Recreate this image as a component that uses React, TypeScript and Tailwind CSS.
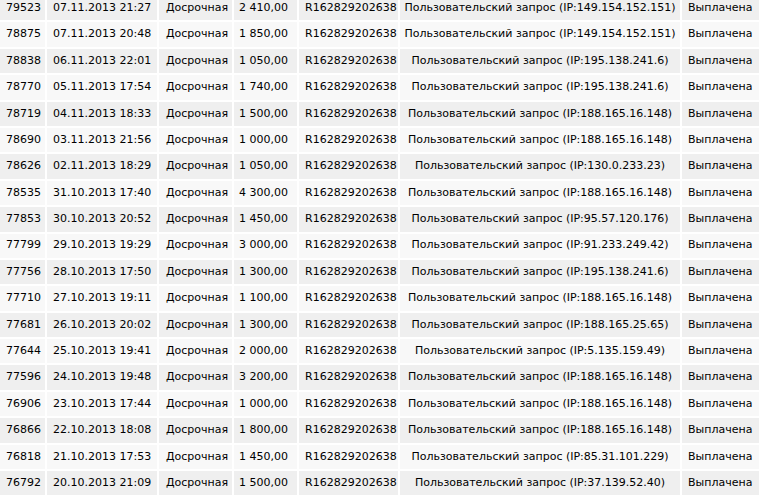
const rows: [string, string, string, string][] = [
  ["79523", "07.11.2013 21:27", "2 410,00", "149.154.152.151"],
  ["78875", "07.11.2013 20:48", "1 850,00", "149.154.152.151"],
  ["78838", "06.11.2013 22:01", "1 050,00", "195.138.241.6"],
  ["78770", "05.11.2013 17:54", "1 740,00", "195.138.241.6"],
  ["78719", "04.11.2013 18:33", "1 500,00", "188.165.16.148"],
  ["78690", "03.11.2013 21:56", "1 000,00", "188.165.16.148"],
  ["78626", "02.11.2013 18:29", "1 050,00", "130.0.233.23"],
  ["78535", "31.10.2013 17:40", "4 300,00", "188.165.16.148"],
  ["77853", "30.10.2013 20:52", "1 450,00", "95.57.120.176"],
  ["77799", "29.10.2013 19:29", "3 000,00", "91.233.249.42"],
  ["77756", "28.10.2013 17:50", "1 300,00", "195.138.241.6"],
  ["77710", "27.10.2013 19:11", "1 100,00", "188.165.16.148"],
  ["77681", "26.10.2013 20:02", "1 300,00", "188.165.25.65"],
  ["77644", "25.10.2013 19:41", "2 000,00", "5.135.159.49"],
  ["77596", "24.10.2013 19:48", "3 200,00", "188.165.16.148"],
  ["76906", "23.10.2013 17:44", "1 000,00", "188.165.16.148"],
  ["76866", "22.10.2013 18:08", "1 800,00", "188.165.16.148"],
  ["76818", "21.10.2013 17:53", "1 450,00", "85.31.101.229"],
  ["76792", "20.10.2013 21:09", "1 500,00", "37.139.52.40"],
];

export default function App() {
  return (
    <div className="w-[763px] h-[504px] overflow-hidden bg-white">
      <div className="mt-[-4px] flex flex-col gap-[2px] text-[11px] text-black font-['DejaVu_Sans',sans-serif]">
        {rows.map(([id, date, sum, ip], i) => (
          <div
            key={id}
            className={`grid grid-cols-[45px_110px_73px_63px_99px_280px_77px] gap-[2px] h-[24.4px] ${
              i % 2 === 0 ? "[&>div]:bg-[#efefef]" : "[&>div]:bg-[#f8f8f8]"
            }`}
          >
            <div className="flex items-center pl-[6px] whitespace-nowrap">{id}</div>
            <div className="flex items-center pl-[6px] whitespace-nowrap">{date}</div>
            <div className="flex items-center pl-[7px] whitespace-nowrap">Досрочная</div>
            <div className="flex items-center pl-[5px] whitespace-nowrap">{sum}</div>
            <div className="flex items-center pl-[6px] whitespace-nowrap">R162829202638</div>
            <div className="flex items-center justify-center whitespace-nowrap">
              Пользовательский запрос (IP:{ip})
            </div>
            <div className="flex items-center pl-[6px] whitespace-nowrap">Выплачена</div>
          </div>
        ))}
      </div>
    </div>
  );
}
